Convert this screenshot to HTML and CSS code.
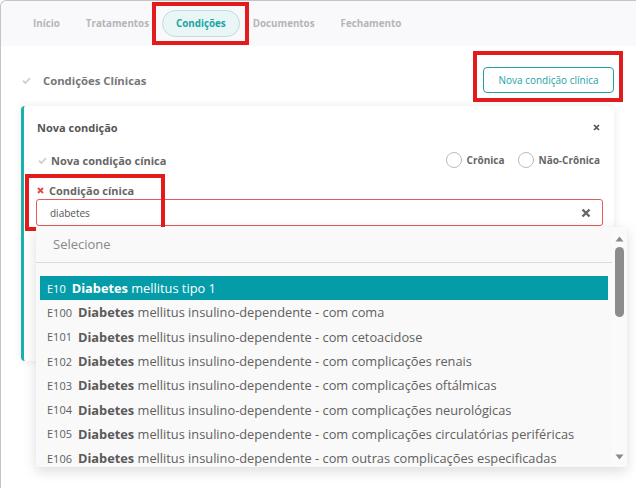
FILE: index.html
```html
<!DOCTYPE html>
<html lang="pt-BR">
<head>
<meta charset="utf-8">
<title>Condições</title>
<link rel="stylesheet" href="styles.css">
</head>
<body>
<div class="frame">
  <nav class="tabs">
    <a class="tab">Início</a>
    <a class="tab">Tratamentos</a>
    <a class="tab active">Condições</a>
    <a class="tab">Documentos</a>
    <a class="tab">Fechamento</a>
  </nav>
  <main class="content">
    <div class="section-head">
      <h2 class="section-title">
        <svg class="check" width="9" height="7" viewBox="0 0 9 7"><path d="M1 3.6 L3.4 6 L8 1.2" fill="none" stroke="#cfcfcf" stroke-width="1.8"/></svg>
        Condições Clínicas
      </h2>
      <button class="btn-outline">Nova condição clínica</button>
    </div>
    <section class="panel">
      <div class="panel-head">
        <span class="panel-title">Nova condição</span>
        <svg class="close" width="7" height="7" viewBox="0 0 7 7"><path d="M1 1 L6 6 M6 1 L1 6" stroke="#555" stroke-width="1.7"/></svg>
      </div>
      <div class="field-row">
        <span class="label">
          <svg class="check" width="9" height="7" viewBox="0 0 9 7"><path d="M1 3.6 L3.4 6 L8 1.2" fill="none" stroke="#cfcfcf" stroke-width="1.8"/></svg>
          Nova condição cínica
        </span>
        <div class="radios">
          <label class="radio"><span class="circle"></span>Crônica</label>
          <label class="radio"><span class="circle"></span>Não-Crônica</label>
        </div>
      </div>
      <div class="field">
        <span class="label">
          <svg class="req" width="7" height="7" viewBox="0 0 7 7"><path d="M1 1 L6 6 M6 1 L1 6" stroke="#e24a4a" stroke-width="1.9"/></svg>
          Condição cínica
        </span>
        <div class="select-wrap">
          <div class="input">
            <span>diabetes</span>
            <svg class="clear" width="10" height="10" viewBox="0 0 10 10"><path d="M1.5 1.5 L8.5 8.5 M8.5 1.5 L1.5 8.5" stroke="#666" stroke-width="2.4"/></svg>
          </div>
          <div class="dropdown">
            <div class="dd-body">
              <div class="dd-placeholder">Selecione</div>
              <ul class="options">
                <li class="option selected"><span class="code">E10</span><b>Diabetes</b>&nbsp;mellitus tipo 1</li>
                <li class="option"><span class="code">E100</span><b>Diabetes</b>&nbsp;mellitus insulino-dependente - com coma</li>
                <li class="option"><span class="code">E101</span><b>Diabetes</b>&nbsp;mellitus insulino-dependente - com cetoacidose</li>
                <li class="option"><span class="code">E102</span><b>Diabetes</b>&nbsp;mellitus insulino-dependente - com complicações renais</li>
                <li class="option"><span class="code">E103</span><b>Diabetes</b>&nbsp;mellitus insulino-dependente - com complicações oftálmicas</li>
                <li class="option"><span class="code">E104</span><b>Diabetes</b>&nbsp;mellitus insulino-dependente - com complicações neurológicas</li>
                <li class="option"><span class="code">E105</span><b>Diabetes</b>&nbsp;mellitus insulino-dependente - com complicações circulatórias periféricas</li>
                <li class="option"><span class="code">E106</span><b>Diabetes</b>&nbsp;mellitus insulino-dependente - com outras complicações especificadas</li>
              </ul>
            </div>
            <div class="scrollbar">
              <svg width="9" height="6" viewBox="0 0 9 6"><path d="M0.5 5.5 L4.5 0.5 L8.5 5.5 Z" fill="#8a8a8a"/></svg>
              <div class="track"><div class="thumb"></div></div>
              <svg width="9" height="6" viewBox="0 0 9 6"><path d="M0.5 0.5 L4.5 5.5 L8.5 0.5 Z" fill="#8a8a8a"/></svg>
            </div>
          </div>
        </div>
      </div>
    </section>
  </main>
</div>
<div class="mark mark-tab"></div>
<div class="mark mark-btn"></div>
<div class="mark mark-input"></div>
</body>
</html>
```

FILE: styles.css
```css
* { box-sizing: border-box; }
html, body { margin: 0; padding: 0; }
body {
  position: relative;
  font-family: "Open Sans", "Liberation Sans", sans-serif;
  background: #fff;
  color: #555;
  overflow: hidden;
  height: 488px;
}
.frame {
  min-height: 488px;
  border-top: 1px solid #c4c4c4;
  border-left: 1px solid #c4c4c4;
  border-top-left-radius: 6px;
  background: #fff;
}
.tabs {
  height: 45px;
  background: #f9f9fb;
  border-top-left-radius: 6px;
  display: flex;
  align-items: center;
  padding-left: 19px;
}
.tab {
  font-size: 9.8px;
  font-weight: 700;
  color: #b5b5b5;
  padding: 0 12px;
  height: 27px;
  line-height: 25px;
  border: 1px solid transparent;
  border-radius: 14px;
}
.tab.active {
  color: #17a6a6;
  background: #eaf5f5;
  border-color: #b7dfdf;
  padding: 0 13px;
}
.content {
  padding: 21px 22px 0 20px;
}
.section-head {
  display: flex;
  justify-content: space-between;
  align-items: center;
  padding-left: 1px;
}
.section-title {
  margin: 0;
  font-size: 11.3px;
  font-weight: 700;
  color: #777;
  display: flex;
  align-items: center;
  gap: 12px;
}
.btn-outline {
  font-family: inherit;
  font-size: 10px;
  color: #1ba3a8;
  background: #fff;
  border: 1px solid #1ba3a8;
  border-radius: 4px;
  height: 26px;
  width: 131px;
  padding: 0;
}
.panel {
  margin-top: 13px;
  height: 255px;
  border-left: 3px solid #1cb0ab;
  border-radius: 4px 6px 6px 4px;
  background: #fff;
  box-shadow: 0 0 10px rgba(0,0,0,0.09);
  padding: 13px 11px 0 12px;
}
.panel-head {
  display: flex;
  justify-content: space-between;
  align-items: center;
  height: 16px;
  padding-right: 3px;
}
.panel-title {
  font-size: 11px;
  font-weight: 700;
  color: #555;
  padding-left: 1px;
}
.field-row {
  margin-top: 17px;
  height: 16px;
  display: flex;
  justify-content: space-between;
  align-items: center;
}
.label {
  font-size: 11px;
  font-weight: 700;
  color: #666;
  display: flex;
  align-items: center;
  gap: 4px;
  padding-left: 2px;
}
.radios {
  display: flex;
  gap: 13px;
  padding-right: 3px;
}
.radio {
  display: flex;
  align-items: center;
  gap: 5px;
  font-size: 10px;
  font-weight: 700;
  color: #666;
}
.circle {
  width: 16px;
  height: 16px;
  border: 1px solid #bdbdbd;
  border-radius: 50%;
  background: #fff;
}
.field {
  margin-top: 14px;
}
.field .label {
  height: 16px;
  gap: 5px;
  padding-left: 1px;
}
.select-wrap {
  position: relative;
  margin-top: 1px;
}
.input {
  height: 27px;
  border: 1px solid #e65a5a;
  border-radius: 3px;
  display: flex;
  align-items: center;
  justify-content: space-between;
  padding: 0 11px 0 13px;
  font-size: 10px;
  color: #555;
}
.dropdown {
  position: absolute;
  top: 28px;
  left: 0;
  width: 591px;
  height: 240px;
  background: #f9f9f9;
  box-shadow: 0 4px 12px rgba(0,0,0,0.14);
  display: flex;
  z-index: 2;
}
.dd-body {
  flex: 1;
  overflow: hidden;
}
.dd-placeholder {
  height: 36px;
  border-bottom: 1px solid #dcdcdc;
  font-size: 13px;
  color: #888;
  padding-left: 17px;
  line-height: 35px;
}
.options {
  list-style: none;
  margin: 0;
  padding: 13px 4px 0;
}
.option {
  height: 24.3px;
  display: flex;
  align-items: center;
  padding-left: 7px;
  font-size: 12.8px;
  color: #606060;
  white-space: nowrap;
}
.option b { font-weight: 700; color: #5a5a5a; }
.option .code {
  font-size: 11px;
  margin-right: 6px;
  color: #606060;
}
.option.selected {
  background: #049ca8;
  color: #fff;
}
.option.selected b, .option.selected .code { color: #fff; }
.scrollbar {
  width: 15px;
  background: #fafafa;
  display: flex;
  flex-direction: column;
  align-items: center;
  padding: 9px 0 7px;
}
.scrollbar .track {
  flex: 1;
  width: 100%;
  padding: 5px 3px 0;
}
.thumb {
  width: 9px;
  height: 70px;
  background: #8c8c8c;
  border-radius: 5px;
}
.mark {
  position: absolute;
  border: 4px solid #e21c1c;
  pointer-events: none;
}
.mark-tab { left: 152px; top: 2px; width: 97px; height: 43px; }
.mark-btn { left: 473px; top: 51px; width: 150px; height: 51px; }
.mark-input { left: 25px; top: 174px; width: 140px; height: 57px; }
```
